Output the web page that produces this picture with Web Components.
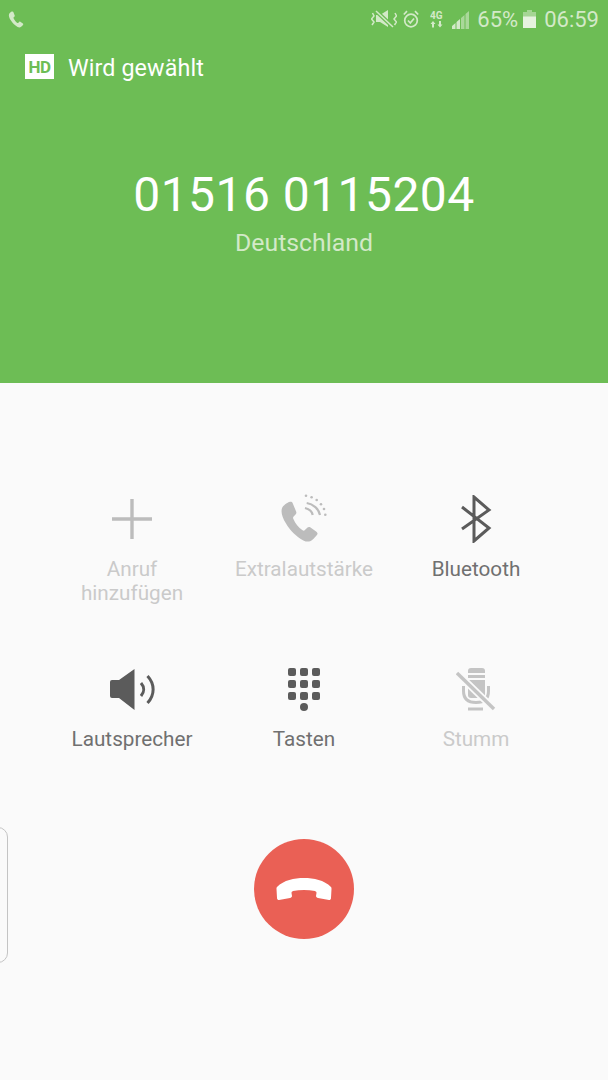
<!DOCTYPE html>
<html lang="de">
<head>
<meta charset="utf-8">
<style>
  html, body { margin: 0; height: 100%; background: #fafafa; }
  body { font-family: Roboto, "Noto Sans", sans-serif; }
</style>
</head>
<body>
<call-screen>
  <call-header slot="header" number="01516 0115204" country="Deutschland" state="Wird gewählt"></call-header>
  <call-action slot="actions" icon="plus" dim>Anruf<br>hinzufügen</call-action>
  <call-action slot="actions" icon="boost" dim>Extralautstärke</call-action>
  <call-action slot="actions" icon="bluetooth">Bluetooth</call-action>
  <call-action slot="actions" icon="speaker">Lautsprecher</call-action>
  <call-action slot="actions" icon="keypad">Tasten</call-action>
  <call-action slot="actions" icon="mute" dim>Stumm</call-action>
  <end-button slot="end"></end-button>
</call-screen>

<script>
const PHONE = 'M7.2 1.6 C6 2 4 3.4 3.4 4.8 C2.6 6.8 3.6 9.8 5.4 12.8 C7.6 16.6 11 20 14.6 21.8 C16.4 22.7 18 22.6 19.2 21.6 C20.2 20.8 21.6 19.4 22 18.6 C22.2 18.1 22 17.6 21.5 17.2 L18.2 14.9 C17.7 14.6 17.2 14.6 16.8 15 L15.3 16.5 C15 16.8 14.6 16.8 14.2 16.5 C12 14.9 10.4 12.9 9.3 10.4 C9.1 9.9 9.2 9.5 9.5 9.2 L10.6 8 C11 7.6 11 7.1 10.8 6.6 L9 2.2 C8.7 1.6 8 1.3 7.2 1.6 Z'

const ICONS = {
  plus: `<svg width="42" height="42" viewBox="0 0 42 42"><path d="M21 1v40M1 21h40" stroke="#bcbcbc" stroke-width="3.4" fill="none"/></svg>`,
  boost: `<svg width="50" height="50" viewBox="0 0 50 50">
    <g transform="translate(-3.4 5) scale(1.9)"><path d="${PHONE}" fill="#bcbcbc"/></g>
    <g fill="none" stroke="#bcbcbc" stroke-width="2.2">
      <path d="M26 14 C30 15 33 17.500 33.700 21"/>
      <path d="M27.700 9 C34 10 40 15 41 21"/>
    </g>
    <g fill="#bcbcbc">
      <circle cx="27" cy="1.700" r="1.300"/><circle cx="32.600" cy="3.300" r="1.300"/><circle cx="37.700" cy="6" r="1.300"/>
      <circle cx="42" cy="10.300" r="1.300"/><circle cx="45" cy="15" r="1.300"/><circle cx="46.300" cy="20.700" r="1.300"/>
    </g></svg>`,
  bluetooth: `<svg width="34" height="48" viewBox="0 0 34 48"><path d="M3 12 L30 33 L15 46 V2 L30 15 L3 34" fill="none" stroke="#5b5b5b" stroke-width="3"/></svg>`,
  speaker: `<svg width="48" height="44" viewBox="0 0 48 44">
    <path d="M2 15 Q2 13 4 13 H11 L26.500 2 V43 L11 31 H4 Q2 31 2 29 Z" fill="#5b5b5b"/>
    <g fill="none" stroke="#5b5b5b" stroke-width="3">
      <path d="M33 16 C36.500 20 36.500 25 33 29"/>
      <path d="M39.500 9 C47 17 47 28 39.500 36"/>
    </g></svg>`,
  keypad: `<svg width="34" height="44" viewBox="0 0 34 44"><g fill="#5b5b5b">
    ${[0, 12, 24].flatMap(y => [0, 12, 24].map(x => `<rect x="${x + 1}" y="${y + 1}" width="8" height="8" rx="2"/>`)).join('')}
    <circle cx="17" cy="40" r="4"/></g></svg>`,
  mute: `<svg width="40" height="44" viewBox="0 0 40 44"><g fill="none" stroke="#c4c4c4">
    <path d="M12 4 Q12 1 15 1 H26 Q29 1 29 4 V28 Q29 31 26 31 H15 Q12 31 12 28 Z" fill="#c4c4c4" stroke="none"/>
    <path d="M12 7 H29 M12 12 H29" stroke="#fafafa" stroke-width="1.800"/>
    <path d="M7.500 19 V24 C7.500 32 12 35.500 20 35.500 C28 35.500 32.500 32 32.500 24 V19" stroke-width="3"/>
    <path d="M12 42 H27" stroke-width="3"/>
    <path d="M1 6 L38 42" stroke="#fafafa" stroke-width="7"/>
    <path d="M1 6 L38 42" stroke-width="3.400"/></g></svg>`
}

class StatusBar extends HTMLElement {
  constructor() {
    super()
    this.attachShadow({mode: 'open'})
    this.shadowRoot.innerHTML = `<style>
      :host { display: flex; align-items: center; height: 38px; padding: 0 9px 0 8px; color: #d3e9c8; }
      .left { flex: 1; display: flex; }
      .right { display: flex; align-items: center; font-size: 22px; }
      svg { display: block; }
    </style>
    <div class="left"><svg width="16" height="17" viewBox="2 1 21 22"><path d="${PHONE}" fill="#d3e9c8"/></svg></div>
    <div class="right">
      <svg width="26" height="18" viewBox="0 0 26 18"><path d="M5 5 H9 L17 0 V17 L9 12 H5 Z" fill="#d3e9c8"/>
        <g fill="none" stroke="#d3e9c8" stroke-width="1.500"><path d="M1.500 3 L3 6 L.5 9 L3 12 L1 15M24 3 L25.500 6 L23 9 L25.500 12 L23.500 15"/><path d="M5 1 L22 17" stroke="#6dbd55" stroke-width="4"/><path d="M5 1 L22 17"/></g></svg>
      <svg width="16" height="18" viewBox="0 0 16 18" style="margin-left:6px"><g fill="none" stroke="#d3e9c8" stroke-width="1.700"><circle cx="8" cy="10.500" r="6.300"/><path d="M5 10.500 L7.300 13 L11 8.500"/><path d="M.8 4.500 L4 1.200 M15.200 4.500 L12 1.200"/></g></svg>
      <svg width="14" height="18" viewBox="0 0 14 18" style="margin-left:11px"><g fill="#d3e9c8"><text x="0" y="8.500" font-size="10" font-weight="700" font-family="Roboto">4G</text><path d="M3 11 L5.500 14 H4 V17.500 H2 V14 H.5 Z M10 17.500 L7.500 14.500 H9 V11 H11 V14.500 H12.500 Z"/></g></svg>
      <svg width="17" height="19" viewBox="0 0 17 19" style="margin-left:8px"><g fill="#d3e9c8"><path d="M0 19 V16 L3.500 13 V19 Z M4.500 19 V12 L8 9 V19 Z"/><path d="M9 19 V8 L12.500 5 V19 Z M13.500 19 V4 L17 1 V19 Z" opacity=".6"/></g></svg>
      <span style="margin-left:8px">65%</span>
      <svg width="13" height="18" viewBox="0 0 13 18" style="margin-left:5px"><path d="M4 0 H9 V2 H13 V18 H0 V2 H4 Z" fill="#d3e9c8" opacity=".55"/><rect y="6.500" width="13" height="11.500" fill="#e6f2df"/></svg>
      <span style="margin-left:8px">06:59</span>
    </div>`
  }
}

class CallHeader extends HTMLElement {
  constructor() {
    super()
    this.attachShadow({mode: 'open'})
    this.shadowRoot.innerHTML = `<style>
      :host { display: flex; flex-direction: column; height: 383px; background: #6dbd55; color: #fff; box-sizing: border-box; }
      .state { display: flex; align-items: center; gap: 14px; padding-left: 25px; height: 25px; margin-top: 16px; font-size: 23.300px; letter-spacing: .1px; }
      .hd { width: 29px; height: 25px; background: #fff; color: #6dbd55; display: flex; align-items: center; justify-content: center; font: 700 17px "Roboto", sans-serif; letter-spacing: -.5px; }
      .st { position: relative; top: 1px; }
      .num { margin-top: 88px; text-align: center; font-size: 48px; line-height: 56px; letter-spacing: .45px; }
      .country { margin-top: 6px; text-align: center; font-size: 24.800px; line-height: 28px; color: #d3e9c8; }
    </style>
    <status-bar></status-bar>
    <div class="state"><span class="hd">HD</span><span class="st"></span></div>
    <div class="num"></div>
    <div class="country"></div>`
  }
  connectedCallback() {
    this.shadowRoot.querySelector('.st').textContent = this.getAttribute('state')
    this.shadowRoot.querySelector('.num').textContent = this.getAttribute('number')
    this.shadowRoot.querySelector('.country').textContent = this.getAttribute('country')
  }
}

class CallAction extends HTMLElement {
  constructor() {
    super()
    this.attachShadow({mode: 'open'})
    this.shadowRoot.innerHTML = `<style>
      :host { display: flex; flex-direction: column; align-items: center; color: #707070; font-size: 20.700px; line-height: 24px; text-align: center; }
      :host([dim]) { color: #cacaca; }
      .icon { height: 50px; display: flex; align-items: center; justify-content: center; margin-bottom: 13px; }
      svg { display: block; }
    </style>
    <div class="icon"></div>
    <div><slot></slot></div>`
  }
  connectedCallback() {
    this.shadowRoot.querySelector('.icon').innerHTML = ICONS[this.getAttribute('icon')]
  }
}

class EndButton extends HTMLElement {
  constructor() {
    super()
    this.attachShadow({mode: 'open'})
    this.shadowRoot.innerHTML = `<style>
      :host { display: flex; align-items: center; justify-content: center; width: 100px; height: 100px; border-radius: 50%; background: #ea6055; }
      svg { display: block; }
    </style>
    <svg width="58" height="24" viewBox="0 0 56 24"><path d="M1 10 C8 3 18 1 28 1 C38 1 48 3 55 10 C55.500 10.500 55.500 11 55.500 12 L55 21 C55 22.500 54 23 53 23 L42 21 C41 20.800 40 20 40 19 L40.500 16 C40.500 15 40 14.500 39 14 C32 12.500 24 12.500 17 14 C16 14.500 15.500 15 15.500 16 L16 19 C16 20 15 20.800 14 21 L3 23 C2 23 1 22.500 1 21 L.5 12 C.5 11 .5 10.500 1 10 Z" fill="#fff"/></svg>`
  }
}

class CallScreen extends HTMLElement {
  constructor() {
    super()
    this.attachShadow({mode: 'open'})
    this.shadowRoot.innerHTML = `<style>
      :host { display: block; position: relative; width: 608px; height: 1080px; overflow: hidden; background: #fafafa; }
      .grid { display: grid; grid-template-columns: repeat(3, 172px); grid-template-rows: 170px 120px; justify-content: center; padding-top: 111px; }
      .end { display: flex; justify-content: center; margin-top: 55px; }
      .handle { position: absolute; left: -12px; top: 827px; width: 18px; height: 134px; border: 1.500px solid #c4c4c4; border-radius: 10px; }
    </style>
    <slot name="header"></slot>
    <div class="grid"><slot name="actions"></slot></div>
    <div class="end"><slot name="end"></slot></div>
    <div class="handle"></div>`
  }
}

customElements.define('status-bar', StatusBar)
customElements.define('call-header', CallHeader)
customElements.define('call-action', CallAction)
customElements.define('end-button', EndButton)
customElements.define('call-screen', CallScreen)
</script>
</body>
</html>
